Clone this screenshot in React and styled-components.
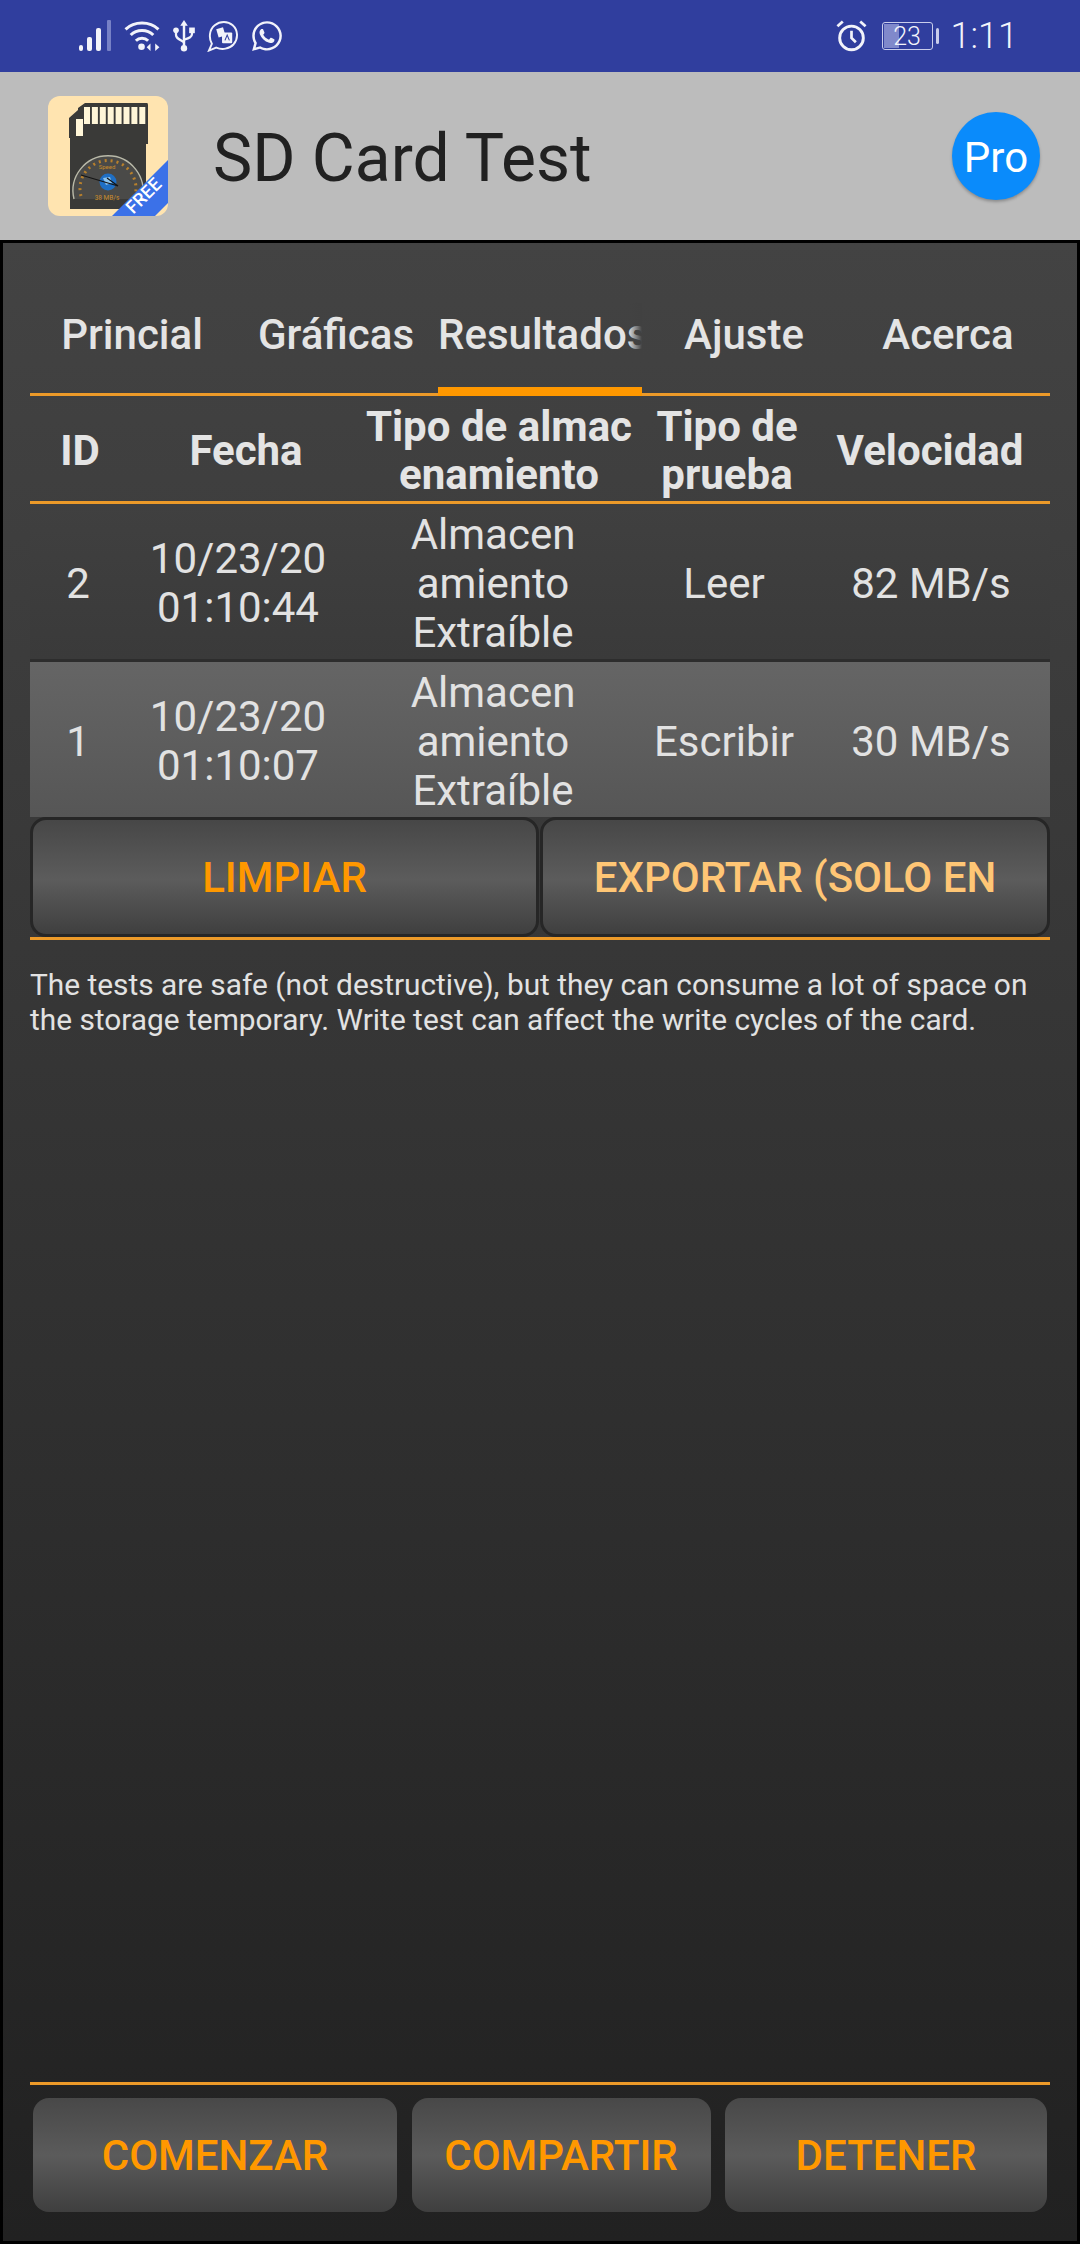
import styled, { createGlobalStyle } from "styled-components";
import { FaWhatsapp } from "react-icons/fa";

const GlobalStyle = createGlobalStyle`
  html, body {
    margin: 0;
    padding: 0;
    background: #212121;
  }
  * {
    box-sizing: border-box;
  }
`;

const Screen = styled.div`
  width: 1080px;
  height: 2244px;
  display: flex;
  flex-direction: column;
  overflow: hidden;
  font-family: Roboto, "Liberation Sans", sans-serif;
`;

const StatusBar = styled.div`
  height: 72px;
  flex: none;
  display: flex;
  align-items: center;
  background: #303e9e;
  color: #f2f3fa;
  padding: 0 62px 0 79px;
`;

const StatusIcons = styled.div`
  display: flex;
  align-items: center;
  gap: 11px;
`;

const Spacer = styled.div`
  flex: 1;
`;

const Battery = styled.div`
  position: relative;
  width: 51px;
  height: 28px;
  margin: 0 8px 0 15px;
  border: 1.5px solid #c9cdeb;
  border-radius: 3px;
  display: flex;
  align-items: center;
  justify-content: center;
  font-size: 25px;
  font-weight: 300;
  color: #f2f3fa;
  &::before {
    content: "";
    position: absolute;
    left: 1px;
    top: 1px;
    bottom: 1px;
    width: 15px;
    background: #8089cb;
  }
  &::after {
    content: "";
    position: absolute;
    right: -7px;
    top: 5px;
    width: 3px;
    height: 16px;
    border-radius: 2px;
    background: #c9cdeb;
  }
`;

const BatteryText = styled.span`
  position: relative;
`;

const Clock = styled.div`
  font-size: 36px;
  font-weight: 300;
  margin-left: 10px;
`;

const AppBar = styled.div`
  height: 168px;
  flex: none;
  display: flex;
  align-items: center;
  background: #bcbcbc;
  padding: 0 40px 0 48px;
`;

const AppIcon = styled.div`
  width: 120px;
  height: 120px;
  border-radius: 12px;
  overflow: hidden;
  flex: none;
  svg {
    display: block;
  }
`;

const Title = styled.h1`
  flex: 1;
  margin: 0 0 0 45px;
  padding-top: 4px;
  font-size: 66px;
  font-weight: 400;
  color: #212121;
`;

const ProButton = styled.div`
  width: 88px;
  height: 88px;
  border-radius: 50%;
  display: flex;
  align-items: center;
  justify-content: center;
  padding-top: 2px;
  background: #0a8bfb;
  color: #fff;
  font-size: 42px;
  box-shadow: 0 2px 3px rgba(0, 0, 0, 0.25);
`;

const Panel = styled.div`
  flex: 1;
  display: flex;
  flex-direction: column;
  border: 3px solid #000;
  padding: 0 27px 0;
  background: linear-gradient(#434343, #212121);
`;

const Tabs = styled.div`
  display: grid;
  grid-template-columns: repeat(5, 1fr);
  height: 153px;
  flex: none;
  border-bottom: 3px solid #ec9a29;
`;

const Tab = styled.div`
  position: relative;
  display: flex;
  justify-content: center;
  padding: 67px 0 0;
  color: #e4e4e4;
  font-size: 42px;
  font-weight: 500;
  line-height: 49px;
  white-space: nowrap;
  overflow: hidden;
  ${(p) =>
    p.$active &&
    `
    justify-content: flex-start;
    margin-bottom: -3px;
    &::after {
      content: "";
      position: absolute;
      left: 0;
      right: 0;
      bottom: 0;
      height: 9px;
      background: #ff9800;
    }
  `}
`;

const Fade = styled.div`
  position: absolute;
  top: 60px;
  right: 0;
  width: 14px;
  height: 60px;
  background: linear-gradient(to right, rgba(65, 65, 65, 0), #414141);
`;

const HeaderRow = styled.div`
  display: grid;
  grid-template-columns: 100px 232px 274px 182px 1fr;
  height: 108px;
  flex: none;
  align-items: center;
  padding-top: 5px;
  border-bottom: 3px solid #ec9a29;
`;

const HeadCell = styled.div`
  text-align: center;
  color: #e4e4e4;
  font-size: 42px;
  font-weight: 700;
  line-height: 48px;
  white-space: nowrap;
  padding-right: ${(p) => (p.$last ? "8px" : "0")};
`;

const DataRow = styled.div`
  display: grid;
  grid-template-columns: 96px 224px 286px 176px 1fr;
  align-items: center;
  flex: none;
  height: ${(p) => (p.$alt ? "155px" : "158px")};
  padding-top: ${(p) => (p.$alt ? "3px" : "3px")};
  color: #e2e2e2;
  background: ${(p) =>
    p.$alt
      ? "linear-gradient(#656565, #565656)"
      : "linear-gradient(#404040, #3a3a3a)"};
  border-bottom: ${(p) => (p.$alt ? "0" : "3px solid #2d2d2d")};
`;

const DataCell = styled.div`
  text-align: center;
  font-size: 42px;
  line-height: 49px;
  white-space: nowrap;
`;

const ActionRow = styled.div`
  display: grid;
  grid-template-columns: 1fr 1fr;
  height: 123px;
  flex: none;
  border-bottom: 3px solid #ec9a29;
`;

const OutlinedButton = styled.div`
  display: flex;
  align-items: center;
  justify-content: center;
  overflow: hidden;
  height: 120px;
  margin-right: ${(p) => (p.$first ? "1px" : "0")};
  border: 3px solid #262626;
  border-radius: 16px;
  background: linear-gradient(#474747, #5c5c5c 52%, #3f3f3f);
  color: ${(p) => p.$color};
  font-size: 42px;
  font-weight: 500;
  white-space: nowrap;
`;

const Notice = styled.p`
  margin: 27px 0 0;
  color: #e2e2e2;
  font-size: 29.85px;
  line-height: 35px;
`;

const FooterBar = styled.div`
  flex: none;
  display: flex;
  justify-content: space-between;
  border-top: 3px solid #ec9a29;
  padding: 13px 3px 29px;
`;

const FooterButton = styled.div`
  width: ${(p) => p.$width}px;
  height: 114px;
  display: flex;
  align-items: center;
  justify-content: center;
  border-radius: 16px;
  background: linear-gradient(#484848, #5b5b5b 50%, #3f3f3f);
  color: #ff9800;
  font-size: 42px;
  font-weight: 500;
  white-space: nowrap;
`;

function SignalIcon() {
  return (
    <svg width="33" height="32" viewBox="0 0 33 32" fill="#f2f3fa">
      <rect x="0" y="25" width="4" height="6" rx="2" />
      <rect x="8" y="17" width="5" height="14" rx="2" />
      <rect x="17" y="8" width="5" height="23" rx="2" />
      <rect x="28" y="0" width="4" height="31" rx="1" fill="#7781c6" />
    </svg>
  );
}

function WifiIcon() {
  return (
    <svg width="38" height="32" viewBox="0 0 38 34" fill="none">
      <path d="M1.5 10C11 1 27 1 36.5 10" stroke="#f2f3fa" strokeWidth="3.2" />
      <path d="M7 16C13.5 9.5 24.5 9.5 31 16" stroke="#f2f3fa" strokeWidth="3.2" />
      <path d="M12.5 22C16 18.5 22 18.5 25.5 22" stroke="#f2f3fa" strokeWidth="3.2" />
      <circle cx="18.5" cy="28.5" r="3.5" fill="#f2f3fa" />
      <path d="M28 25V33L24 29Z" fill="#f2f3fa" />
      <path d="M33 25V33L37.5 29Z" fill="#f2f3fa" />
    </svg>
  );
}

function UsbIcon() {
  return (
    <svg width="24" height="32" viewBox="0 0 24 34" fill="none">
      <path d="M12 0L16 6H8Z" fill="#f2f3fa" />
      <path d="M12 5V29" stroke="#f2f3fa" strokeWidth="2.6" />
      <circle cx="12" cy="30" r="3.4" fill="#f2f3fa" />
      <path d="M3.5 12V16C3.5 19 6 20 12 23.5" stroke="#f2f3fa" strokeWidth="2.4" />
      <path d="M20.5 12V15C20.5 18 18 19 12 21" stroke="#f2f3fa" strokeWidth="2.4" />
      <circle cx="3.5" cy="11" r="3" fill="#f2f3fa" />
      <rect x="17.5" y="8" width="6" height="6" fill="#f2f3fa" />
    </svg>
  );
}

function TranslateIcon() {
  return (
    <svg width="32" height="32" viewBox="0 0 32 33" fill="none">
      <path
        d="M4.5 24.5C1 18 2 10 7.5 5.5C13 1 21 1 26 5.5C31.5 10.5 32 19 27 25C22.5 30 15 31 9 28.5L1.5 31.5Z"
        stroke="#f2f3fa"
        strokeWidth="2"
      />
      <path d="M9 9.5L16 7.5L18.5 16L11.5 18Z" fill="#f2f3fa" />
      <rect x="15" y="13" width="10.5" height="11" rx="1" fill="#f2f3fa" />
      <path d="M18 21L20.3 15.5L22.6 21" stroke="#303e9e" strokeWidth="1.1" />
    </svg>
  );
}

function AlarmIcon() {
  return (
    <svg width="31" height="32" viewBox="0 0 31 33" fill="none" stroke="#f2f3fa">
      <circle cx="15.5" cy="18.5" r="12.2" strokeWidth="3" />
      <path d="M15.5 11V18.5L20 23" strokeWidth="2.8" />
      <path d="M1 6.5L6.5 1.5" strokeWidth="2.8" />
      <path d="M30 6.5L24.5 1.5" strokeWidth="2.8" />
    </svg>
  );
}

function AppLogo() {
  const ticks = [0, 1, 2, 3, 4, 5, 6, 7];
  return (
    <svg width="120" height="120" viewBox="0 0 120 120">
      <rect width="120" height="120" fill="#ffe4b0" />
      <path
        d="M37 7H99Q100 7 100 9V48H98V113H22V42H21V22L30 14V12Z"
        fill="#3a3a38"
      />
      {ticks.map((i) => (
        <rect key={i} x={36 + i * 7.9} y="11" width="6" height="17" fill="#fff6d8" />
      ))}
      <rect x="28" y="23" width="7" height="17" fill="#fff6d8" />
      <path
        d="M26 103A35 35 0 1 1 94 103"
        fill="#4a4a48"
        stroke="#b9b9a8"
        strokeWidth="1.4"
      />
      <path
        d="M33 100A28 28 0 1 1 87 100"
        fill="none"
        stroke="#b8802c"
        strokeWidth="3"
        strokeDasharray="2 4"
      />
      <text x="59" y="73" fontSize="6" textAnchor="middle" fill="#c98a2a">
        Speed
      </text>
      <text x="59" y="104" fontSize="6.5" textAnchor="middle" fill="#c98a2a">
        38 MB/s
      </text>
      <circle cx="60" cy="86" r="8.5" fill="#1f6fc4" />
      <path d="M55 82L62 81L64 87L58 89Z" fill="#8cc4ee" />
      <path d="M33 79L70 90L59 82" fill="none" stroke="#151515" strokeWidth="1.2" />
      <path d="M120 64L64 120H107L120 107Z" fill="#3b71e8" />
      <text
        x="0"
        y="0"
        fontSize="18"
        fontWeight="500"
        fill="#fff"
        textAnchor="middle"
        transform="translate(100 104) rotate(-45)"
      >
        FREE
      </text>
    </svg>
  );
}

const rows = [
  { id: 2, date: "10/23/20", time: "01:10:44", kind: "Leer", speed: "82 MB/s" },
  { id: 1, date: "10/23/20", time: "01:10:07", kind: "Escribir", speed: "30 MB/s", alt: true },
];

export default function App() {
  return (
    <Screen>
      <GlobalStyle />
      <StatusBar>
        <StatusIcons>
          <SignalIcon />
          <WifiIcon />
          <UsbIcon />
          <TranslateIcon />
          <FaWhatsapp size={34} />
        </StatusIcons>
        <Spacer />
        <AlarmIcon />
        <Battery>
          <BatteryText>23</BatteryText>
        </Battery>
        <Clock>1:11</Clock>
      </StatusBar>
      <AppBar>
        <AppIcon>
          <AppLogo />
        </AppIcon>
        <Title>SD Card Test</Title>
        <ProButton>Pro</ProButton>
      </AppBar>
      <Panel>
        <Tabs>
          <Tab>Princial</Tab>
          <Tab>Gráficas</Tab>
          <Tab $active>
            Resultados
            <Fade />
          </Tab>
          <Tab>Ajuste</Tab>
          <Tab>Acerca</Tab>
        </Tabs>
        <HeaderRow>
          <HeadCell>ID</HeadCell>
          <HeadCell>Fecha</HeadCell>
          <HeadCell>
            Tipo de almac
            <br />
            enamiento
          </HeadCell>
          <HeadCell>
            Tipo de
            <br />
            prueba
          </HeadCell>
          <HeadCell $last>Velocidad</HeadCell>
        </HeaderRow>
        {rows.map((r) => (
          <DataRow key={r.id} $alt={r.alt}>
            <DataCell>{r.id}</DataCell>
            <DataCell>
              {r.date}
              <br />
              {r.time}
            </DataCell>
            <DataCell>
              Almacen
              <br />
              amiento
              <br />
              Extraíble
            </DataCell>
            <DataCell>{r.kind}</DataCell>
            <DataCell>{r.speed}</DataCell>
          </DataRow>
        ))}
        <ActionRow>
          <OutlinedButton $first $color="#ff9800">
            LIMPIAR
          </OutlinedButton>
          <OutlinedButton $color="#ffc675">EXPORTAR (SOLO EN</OutlinedButton>
        </ActionRow>
        <Notice>
          The tests are safe (not destructive), but they can consume a lot of space on
          <br />
          the storage temporary. Write test can affect the write cycles of the card.
        </Notice>
        <Spacer />
        <FooterBar>
          <FooterButton $width={364}>COMENZAR</FooterButton>
          <FooterButton $width={299}>COMPARTIR</FooterButton>
          <FooterButton $width={322}>DETENER</FooterButton>
        </FooterBar>
      </Panel>
    </Screen>
  );
}
